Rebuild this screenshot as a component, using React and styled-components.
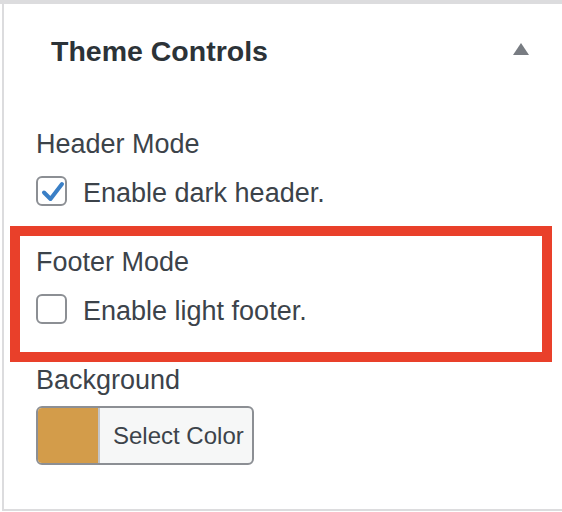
import styled, { createGlobalStyle, css } from "styled-components";

const GlobalStyle = createGlobalStyle`
  body {
    margin: 0;
    background: #fff;
    overflow: hidden;
    font-family: "Liberation Sans", Arial, sans-serif;
  }
`;

export default function App() {
  return (
    <>
      <GlobalStyle />
      <Page>
        <Panel>
          <Header>
            <Title>Theme Controls</Title>
            <Toggle width="16" height="12" viewBox="0 0 16 12">
              <polygon points="8,0 16,12 0,12" fill="#787c82" />
            </Toggle>
          </Header>
          <Body>
            <Section>
              <Label>Header Mode</Label>
              <CheckRow checked text="Enable dark header." />
            </Section>
            <Section $highlight>
              <Label>Footer Mode</Label>
              <CheckRow text="Enable light footer." />
            </Section>
            <Section>
              <Label $tight>Background</Label>
              <ColorButton>
                <Swatch $color="#d39c4a" />
                <ColorText>Select Color</ColorText>
              </ColorButton>
            </Section>
          </Body>
        </Panel>
      </Page>
    </>
  );
}

function CheckRow({ checked, text }) {
  return (
    <Row>
      <Box>
        {checked && (
          <svg width="30" height="30" viewBox="0 0 30 30">
            <path
              d="M7 16.5 L13.5 23 L25 8"
              fill="none"
              stroke="#3a7fc6"
              strokeWidth="4"
              strokeLinecap="round"
              strokeLinejoin="round"
            />
          </svg>
        )}
      </Box>
      <RowText>{text}</RowText>
    </Row>
  );
}

const Page = styled.div`
  border-top: 4px solid #dcdcde;
`;

const Panel = styled.div`
  box-sizing: border-box;
  height: 507px;
  margin-left: 2px;
  border-left: 2px solid #dcdcde;
  border-bottom: 2px solid #dcdcde;
`;

const Header = styled.div`
  display: flex;
  align-items: center;
  justify-content: space-between;
  padding: 31px 33px 0 47px;
`;

const Title = styled.h2`
  margin: 0;
  font-size: 28.5px;
  line-height: 32px;
  font-weight: 700;
  color: #2c3338;
`;

const Toggle = styled.svg`
  display: block;
  margin-top: -4px;
`;

const Body = styled.div`
  padding: 62px 0 0 32px;
`;

const Section = styled.div`
  position: relative;
  margin-bottom: 41px;

  ${({ $highlight }) =>
    $highlight &&
    css`
      &::after {
        content: "";
        position: absolute;
        left: -26px;
        top: -21px;
        width: 542px;
        height: 136px;
        box-sizing: border-box;
        border: 10px solid #e9402a;
        pointer-events: none;
      }
    `}
`;

const Label = styled.div`
  font-size: 27px;
  line-height: 30px;
  color: #3c434a;
  margin-bottom: ${({ $tight }) => ($tight ? "11px" : "17px")};
`;

const Row = styled.label`
  display: flex;
  align-items: flex-start;
  gap: 16px;
  height: 30px;
`;

const Box = styled.span`
  box-sizing: border-box;
  width: 31px;
  height: 30px;
  border: 2px solid #8c8f94;
  border-radius: 6px;
  background: #fff;
  display: flex;
  align-items: center;
  justify-content: center;

  svg {
    display: block;
    flex: none;
  }
`;

const RowText = styled.span`
  font-size: 27px;
  line-height: 30px;
  color: #3c434a;
  padding-top: 2px;
`;

const ColorButton = styled.div`
  box-sizing: border-box;
  display: flex;
  width: 218px;
  height: 59px;
  border: 2px solid #8c8f94;
  border-radius: 6px;
  background: #f6f7f7;
  overflow: hidden;
`;

const Swatch = styled.span`
  width: 60px;
  background: ${({ $color }) => $color};
  border-right: 2px solid #c3c4c7;
`;

const ColorText = styled.span`
  display: flex;
  align-items: center;
  padding-left: 13px;
  font-size: 24px;
  color: #3c434a;
`;
